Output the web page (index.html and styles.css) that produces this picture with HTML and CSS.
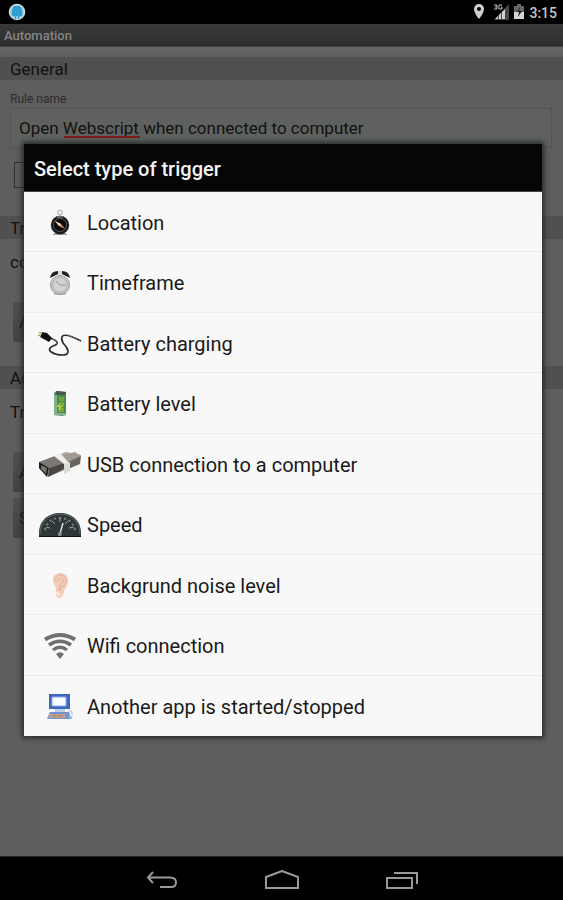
FILE: index.html
```html
<!DOCTYPE html>
<html lang="en">
<head>
    <meta charset="UTF-8">
    <meta name="viewport" content="width=device-width, initial-scale=1.0">
    <title>Automation</title>
    <link rel="stylesheet" href="styles.css">
</head>
<body>

<header class="statusBar">
    <svg class="appIcon" width="18" height="18" viewBox="0 0 18 18">
        <circle cx="9" cy="9" r="8.300" fill="#c3d6dc"/>
        <circle cx="9" cy="9" r="6.600" fill="#8cc6dc"/>
        <path d="M4 8a5 5 0 0 1 10 0v5H4z" fill="#2da0d0"/>
        <path d="M7 12h1v4H7zM10 12h1v4h-1z" fill="#2da0d0"/>
        <path d="M6 3l1 2M12 3l-1 2" stroke="#2383ad" fill="none"/>
    </svg>
    <div class="statusIcons">
        <svg width="12" height="16" viewBox="0 0 12 16">
            <path d="M6 0a5 5 0 0 0-5 5c0 4 5 10 5 10s5-6 5-10a5 5 0 0 0-5-5zm0 3a2 2 0 1 1 0 4 2 2 0 0 1 0-4z" fill="#d0d0d0" fill-rule="evenodd"/>
        </svg>
        <svg class="signal" width="17" height="16" viewBox="0 0 17 16">
            <path d="M16 0v16H1z" fill="#484848"/>
            <path d="M2 15l3-3v3zM6 11l2-2v6H6zM9 8l3-3v10H9z" fill="#d0d0d0"/>
            <path d="M1 1h3v4H1M2 3h2M9 1H6v4h3V3H8" stroke="#c0c0c0" fill="none"/>
        </svg>
        <svg class="batteryState" width="10" height="16" viewBox="0 0 10 16">
            <path d="M3 0h4v2h3v7H0V2h3z" fill="#666"/>
            <path d="M0 8h10v7H0z" fill="#d5d5d5"/>
            <path d="M6 3L3 8h2l-1 5 4-6H5z" fill="#151515"/>
        </svg>
        <span class="clock">3:15</span>
    </div>
</header>

<div class="titleBar">Automation</div>

<main class="page">
    <h2>General</h2>
    <div class="field">
        <label for="ruleName">Rule name</label>
        <div class="inputWrap">
            <input type="text" id="ruleName" name="ruleName" class="textInput" value="Open Webscript when connected to computer" spellcheck="false">
            <span class="spellMark"></span>
        </div>
    </div>
    <input type="checkbox" id="active" class="checkbox" aria-label="Rule is active">

    <h2 class="spaced">Triggers</h2>
    <p>computer</p>
    <button type="button" class="pageButton">Add</button>

    <h2>Actions</h2>
    <p>Trigger</p>
    <button type="button" class="pageButton">Add</button>
    <button type="button" class="pageButton save">Save</button>
</main>

<nav class="navBar">
    <button type="button" aria-label="Back">
        <svg width="34" height="22" viewBox="0 0 34 22">
            <path d="M8 2L3 7.500L8 13M4 7.500H25Q31 7.500 31 12.500T25 17H15" fill="none" stroke="#999" stroke-width="2"/>
        </svg>
    </button>
    <button type="button" aria-label="Home">
        <svg width="36" height="22" viewBox="0 0 36 22">
            <path d="M2 18V7L18 1L34 7V18Z" fill="none" stroke="#999" stroke-width="2"/>
        </svg>
    </button>
    <button type="button" aria-label="Recent apps">
        <svg width="34" height="22" viewBox="0 0 34 22">
            <path d="M2 8H27V18H2ZM9 3H32V14" fill="none" stroke="#999" stroke-width="2"/>
        </svg>
    </button>
</nav>

<div class="dialog" role="dialog" aria-labelledby="dialogTitle">
    <h1 id="dialogTitle">Select type of trigger</h1>
    <ul class="triggers">
        <li><button type="button">
            <svg viewBox="0 0 44 28">
                <circle cx="22" cy="3.500" r="2.300" fill="none" stroke="#bbb" stroke-width="1.300"/>
                <path d="M18 7h8v3h-8zM17 23h10l2 3H15z" fill="#999"/>
                <circle cx="22" cy="16" r="9.200" fill="#1c1c1c"/>
                <circle cx="22" cy="16" r="6.500" fill="#090909" stroke="#555"/>
                <path d="M19 8h6" stroke="#aaa"/>
                <path d="M17 12l6 3 4 5-6-3z" fill="#d99a68"/>
                <path d="M17 12l4 5 2-2z" fill="#f3d2b5"/>
            </svg>
            <span>Location</span>
        </button></li>
        <li><button type="button">
            <svg viewBox="0 0 44 28">
                <path d="M19 2h6v4h-6z" fill="#ddd"/>
                <path d="M12 9q1-7 8-7v3zM32 9q-1-7-8-7v3z" fill="#202020"/>
                <circle cx="22" cy="16" r="9.500" fill="#c9c9c9" stroke="#999"/>
                <circle cx="22" cy="16" r="7.300" fill="#d2d2d2" stroke="#b2b2b2"/>
                <path d="M18 12l4 4h6" stroke="#999" fill="none"/>
                <path d="M16 25h12" stroke="#999"/>
            </svg>
            <span>Timeframe</span>
        </button></li>
        <li><button type="button">
            <svg viewBox="0 0 44 28">
                <path d="M12 8C21 11 21 14 15 16C6 20 16 25 25 25C34 25 29 17 25 13C20 2 30 4 43 11" fill="none" stroke="#292929" stroke-width="1.700"/>
                <path d="M12 8C21 11 21 14 15 16M30 5L43 11" fill="none" stroke="#999" stroke-dasharray="1 2"/>
                <path d="M4 2l5 1 5 5-3 4-9-5z" fill="#111"/>
                <path d="M1 2l3 2M0 5l3 1" stroke="#b2a052" stroke-width="1.400"/>
            </svg>
            <span>Battery charging</span>
        </button></li>
        <li><button type="button">
            <svg viewBox="0 0 44 28">
                <path d="M16 3l3-2 9 1v23l-4 1-8-1z" fill="#4a8c50"/>
                <path d="M16 3l3-1v22l-3 1z" fill="#83b28a"/>
                <path d="M18 1l10 1v3H17z" fill="#4b5a4e"/>
                <path d="M21 7h5v4h-5zM21 12h5v5h-5zM20 18h6v4h-6z" fill="#76a838"/>
                <path d="M18 17l4-4v4l4-3-5 7v-4z" fill="#c9cb38"/>
                <path d="M16 24h12" stroke="#8bab96" stroke-width="2"/>
            </svg>
            <span>Battery level</span>
        </button></li>
        <li><button type="button">
            <svg viewBox="0 0 44 28">
                <path d="M1 11L28 1l15 3-2 9-31 13-9-9z" fill="#aaa69f"/>
                <path d="M1 11l10 5-2 10-8-9z" fill="#171717"/>
                <path d="M3 14l6 3-1 6-5-5z" fill="#77736d"/>
                <path d="M1 11l16-6 9 7-15 5z" fill="#7d7972"/>
                <path d="M11 17l15-5v6l-16 8z" fill="#4a4641"/>
                <path d="M25 4l12-3 6 4-13 6z" fill="#a09b93"/>
                <path d="M30 11l13-6-1 8-12 5z" fill="#6b665f"/>
                <path d="M16 5l6-3 10 11v8l-6 2V13z" fill="#eee"/>
                <path d="M26 13l6-2v9l-6 3z" fill="#dcdbd8"/>
            </svg>
            <span>USB connection to a computer</span>
        </button></li>
        <li><button type="button">
            <svg viewBox="0 0 44 28">
                <path d="M1 26v-4C1 10 10 2 22 2s21 8 21 20v4z" fill="#303738"/>
                <path d="M2 23C2 11 11 3 22 3s20 8 20 20" fill="none" stroke="#606768"/>
                <path d="M7 19C9 11 14 7 22 7s13 4 15 12" fill="none" stroke="#7d8484" stroke-width="2" stroke-dasharray="2 3"/>
                <path d="M8 16l4 1M14 10l3 3M22 7v4M30 10l-3 3M36 16l-5 1" stroke="#9ba1a1"/>
                <path d="M21 26l4-14" stroke="#e5e5e5" stroke-width="1.400"/>
                <circle cx="22" cy="23" r="2" fill="#879090"/>
                <path d="M1 25.500h42" stroke="#111"/>
            </svg>
            <span>Speed</span>
        </button></li>
        <li><button type="button">
            <svg viewBox="0 0 44 28">
                <path d="M15 8c0-5 4-7 8-7 5 0 8 5 7 10-1 4-3 5-4 9-1 5-5 8-7 5-2-2-1-5-1-8 0-3-3-5-3-9z" fill="#f5cdb8"/>
                <path d="M17 9c0-8 11-8 11 0 0 5-5 5-6 9M19 10c1-5 6-5 6-1s-4 2-3 5-1 5-3 4" fill="none" stroke="#dfae98"/>
                <path d="M19 20q1 3 3 3" fill="none" stroke="#fff0e5" stroke-width="2"/>
            </svg>
            <span>Backgrund noise level</span>
        </button></li>
        <li><button type="button">
            <svg viewBox="0 0 44 28">
                <g fill="none" stroke="#707070">
                    <path d="M7 7.500Q22-1.500 37 7.500" stroke-width="4"/>
                    <path d="M11 13Q22 5.500 33 13" stroke-width="3.600"/>
                    <path d="M15 18Q22 12.500 29 18" stroke-width="3.400"/>
                </g>
                <path d="M18 22q4-3.500 8 0l-4 5z" fill="#707070"/>
            </svg>
            <span>Wifi connection</span>
        </button></li>
        <li><button type="button">
            <svg viewBox="0 0 44 28">
                <path d="M11 1h21v15H11z" fill="#3c68c4"/>
                <path d="M14 4h14v9H14z" fill="#f8fbff" stroke="#91acdf"/>
                <path d="M17 16h10v3H17z" fill="#c0cee7"/>
                <path d="M12 19h19l2 7H9z" fill="#7191cf"/>
                <path d="M12 21h15l1 4H11z" fill="#c5a58e"/>
                <path d="M13 23h14M17 21v4M22 21v4" stroke="#a38776"/>
                <path d="M30 18q5-1 4 4" fill="none" stroke="#a5b9df"/>
                <path d="M31 22l4 2-2 2-3-2z" fill="#98afd9"/>
            </svg>
            <span>Another app is started/stopped</span>
        </button></li>
    </ul>
</div>

</body>
</html>
```
FILE: styles.css
```css
* {
    box-sizing: border-box;
}
body {
    font-family: Roboto, Arial, sans-serif;
    background-color: #5e5e5e;
    color: #111;
    display: flex;
    flex-direction: column;
    position: relative;
    min-height: 100vh;
    margin: 0;
}
button {
    font-family: inherit;
    border: none;
    cursor: pointer;
}
.statusBar {
    display: flex;
    justify-content: space-between;
    align-items: center;
    height: 24px;
    padding: 0 6px 0 8px;
    background: #000;
}
.statusIcons {
    display: flex;
    align-items: center;
    gap: 8px;
}
.batteryState {
    margin-left: -4px;
}
.clock {
    margin-left: -3px;
    padding-top: 2px;
    color: #c4c4c4;
    font-size: 14px;
    font-weight: 500;
    line-height: 22px;
}
.titleBar {
    height: 23px;
    padding: 0 4px;
    background: linear-gradient(#393939, #2e2e2e);
    border-bottom: 1px solid #464646;
    color: #858585;
    font-size: 13px;
    font-weight: 500;
    line-height: 23px;
}
.page {
    flex: 1;
    padding-top: 10px;
    background: linear-gradient(#646464, #5e5e5e 12px);
}
.page h2 {
    margin: 0;
    padding: 1px 10px 0;
    background-color: #505050;
    font-size: 17px;
    font-weight: normal;
    line-height: 22px;
}
.page .spaced {
    margin-top: 28px;
}
.page p {
    margin: 0 0 17px;
    padding: 0 10px;
    font-size: 17px;
    line-height: 46px;
}
.field {
    padding: 11px 11px 0 10px;
}
.field label {
    display: block;
    color: #2c2c2c;
    font-size: 12px;
    line-height: 16px;
}
.inputWrap {
    position: relative;
    margin-top: 1px;
}
.textInput {
    display: block;
    width: 100%;
    height: 40px;
    padding: 0 8px;
    background: #5f615f;
    border: 1px solid #525552;
    color: #111;
    font-family: inherit;
    font-size: 17px;
}
/* spelling line under the second word */
.spellMark {
    position: absolute;
    left: 54px;
    top: 28px;
    width: 76px;
    height: 2px;
    background: #7d1c1c;
}
.checkbox {
    appearance: none;
    display: block;
    width: 26px;
    height: 26px;
    margin: 14px 0 0 14px;
    border: 1px solid #303030;
}
.pageButton {
    display: block;
    width: 120px;
    height: 40px;
    margin: 0 0 24px 13px;
    padding: 0 6px;
    background: linear-gradient(#505050, #434343);
    border-radius: 2px;
    color: #111;
    font-size: 17px;
    text-align: left;
}
.pageButton:has(+ .save) {
    margin-bottom: 6px;
}
.navBar {
    display: flex;
    justify-content: center;
    align-items: center;
    gap: 20px;
    height: 44px;
    background: #000;
    border-top: 1px solid #242424;
}
.navBar button {
    display: flex;
    justify-content: center;
    width: 100px;
    padding: 4px 0 0;
    background: none;
}
.dialog {
    position: absolute;
    top: 144px;
    left: 24px;
    right: 21px;
    background: #f8f8f8;
    box-shadow: 0 0 5px 2px #252b27;
}
.dialog h1 {
    margin: 0;
    padding: 4px 10px 0;
    background: #060606;
    border-bottom: 1px solid #444;
    color: #f4f4f4;
    font-size: 20px;
    font-weight: 500;
    line-height: 43px;
}
.triggers {
    list-style: none;
    margin: 0;
    padding: 0;
}
.triggers li {
    height: 60px;
    border-bottom: 1px solid #ebebeb;
}
.triggers li:nth-child(even) {
    height: 61px;
}
.triggers li:last-child {
    border-bottom: none;
}
.triggers button {
    display: flex;
    align-items: center;
    gap: 5px;
    width: 100%;
    height: 100%;
    padding: 2px 14px 0;
    background: none;
    color: #1a1a1a;
    font-size: 20px;
    line-height: 24px;
    text-align: left;
}
.triggers button:hover {
    background-color: #e4f1f7;
}
.triggers svg {
    flex: none;
    width: 44px;
    height: 28px;
}
```
